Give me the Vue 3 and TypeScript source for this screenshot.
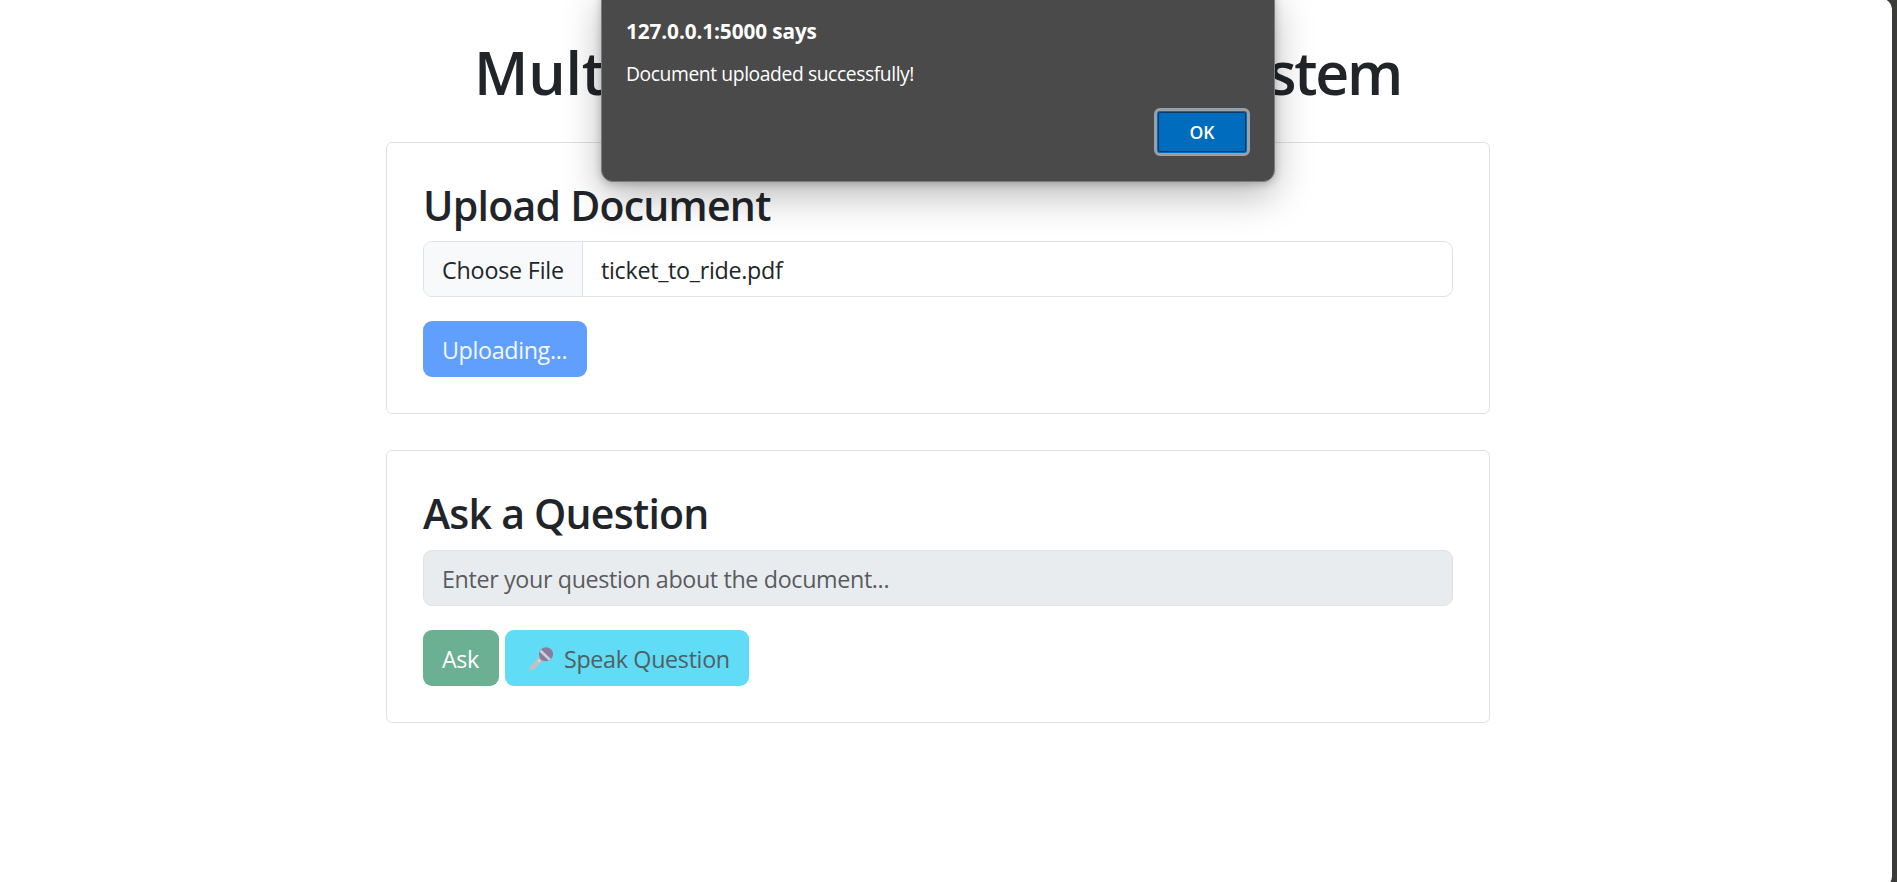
<script setup lang="ts">
import { ref } from 'vue'

const fileName = ref('ticket_to_ride.pdf')
const question = ref('')
const dialog = {
  origin: '127.0.0.1:5000 says',
  message: 'Document uploaded successfully!',
}
</script>

<template>
  <div class="window">
    <div class="page">
      <main class="container">
        <h1 class="title"><span>Mult</span><span class="title-end">stem</span></h1>

        <section class="card">
          <h2 class="heading upload-heading">Upload Document</h2>
          <div class="field file">
            <span class="choose">Choose File</span>
            <span class="name">{{ fileName }}</span>
          </div>
          <div class="actions">
            <button class="btn primary" disabled>Uploading...</button>
          </div>
        </section>

        <section class="card">
          <h2 class="heading">Ask a Question</h2>
          <input
            v-model="question"
            class="field question"
            type="text"
            placeholder="Enter your question about the document..."
            disabled
          />
          <div class="actions">
            <button class="btn success" disabled>Ask</button>
            <button class="btn info" disabled>
              <svg class="mic" viewBox="0 0 24 24" aria-hidden="true">
                <path d="M10.6 9.2 14.8 13.4 4.2 22.8Q2.4 24.2.9 23 -.4 21.6.8 19.9Z" fill="#bfc1c3" />
                <path d="M10.6 9.2 14.8 13.4 13 15 9.2 11Z" fill="#aeb1b6" />
                <circle cx="17" cy="7.2" r="7" fill="#8b7b9d" />
                <path d="M12.1 2.5 22 12.1 20 13.8 10.6 4.8Z" fill="#cdd1d9" />
                <circle cx="10" cy="13.8" r="1.2" fill="#d9e3e6" />
              </svg>
              <span>Speak Question</span>
            </button>
          </div>
        </section>
      </main>
    </div>

    <div class="dialog" role="alertdialog">
      <div class="origin">{{ dialog.origin }}</div>
      <div class="message">{{ dialog.message }}</div>
      <div class="dialog-actions">
        <button class="ok">OK</button>
      </div>
    </div>
  </div>
</template>

<style>
body {
  margin: 0;
  overflow: hidden;
}
</style>

<style scoped>
.window {
  position: relative;
  height: 882px;
  overflow: hidden;
  background: #3b3b38;
  color: #212529;
  font-family: "Open Sans", "Noto Sans", sans-serif;
  font-size: 23.3px;
}
.window * {
  box-sizing: border-box;
}
.page {
  width: 1892px;
  height: 890px;
  margin-top: -2px;
  padding-top: 38px;
  border-radius: 0 12px 12px 0;
  background: #fff;
}
.container {
  width: 1104px;
  margin-left: 386px;
}
.title {
  display: flex;
  justify-content: space-between;
  height: 72px;
  margin: 0 0 34px;
  padding: 0 89px 0 88px;
  font-size: 59px;
  font-weight: 550;
  line-height: 72px;
  letter-spacing: -0.15px;
}
.title-end {
  letter-spacing: -2.3px;
}
.card {
  margin-bottom: 36px;
  padding: 36px;
  border: 1px solid #dee2e6;
  border-radius: 6px;
}
.heading {
  height: 50.4px;
  margin: 0 0 12px;
  padding-top: 1px;
  font-size: 41px;
  font-weight: 550;
  line-height: 50.4px;
  letter-spacing: -0.76px;
}
.upload-heading {
  letter-spacing: -0.75px;
}
.field {
  width: 100%;
  height: 56px;
  border: 1px solid #dee2e6;
  border-radius: 9px;
}
.file {
  display: flex;
  overflow: hidden;
  line-height: 56px;
}
.choose {
  width: 159px;
  padding-left: 18px;
  border-right: 1px solid #dee2e6;
  background: #f8f9fa;
  letter-spacing: -0.2px;
}
.name {
  padding-left: 18px;
  letter-spacing: -0.3px;
}
.question {
  display: block;
  padding: 2px 18px 0;
  background: #e9ecef;
  font: inherit;
  letter-spacing: -0.36px;
}
.question::placeholder {
  color: #595c5f;
  opacity: 1;
}
.actions {
  display: flex;
  gap: 6px;
  margin-top: 24px;
}
.btn {
  display: flex;
  align-items: center;
  height: 56px;
  padding: 2px 0 0 19px;
  border: 0;
  border-radius: 9px;
  color: #fff;
  font: inherit;
  white-space: nowrap;
}
.primary {
  width: 164px;
  background: #619fff;
  color: #f3f8ff;
  font-weight: 440;
  letter-spacing: -0.36px;
}
.success {
  width: 76px;
  background: #6bb092;
  font-weight: 460;
  letter-spacing: -0.4px;
}
.info {
  width: 244px;
  background: #61dcf6;
  color: #4f6063;
  letter-spacing: -0.33px;
}
.mic {
  width: 24px;
  height: 24px;
  margin: 0 11px 0 5px;
}
.dialog {
  position: absolute;
  top: -12px;
  left: 601px;
  width: 674px;
  height: 194px;
  padding: 28px 24px 25px;
  border: 1px solid #7c7c7c;
  border-radius: 12px;
  background: #4a4a4a;
  color: #fff;
  box-shadow: 0 14px 38px rgba(0, 0, 0, 0.27), 0 2px 8px rgba(0, 0, 0, 0.22);
}
.origin {
  height: 28px;
  font-size: 20.8px;
  font-weight: 700;
  line-height: 28px;
  letter-spacing: -0.12px;
}
.message {
  height: 28px;
  margin-top: 15px;
  font-size: 19.3px;
  line-height: 28px;
  letter-spacing: -0.41px;
}
.dialog-actions {
  display: flex;
  justify-content: flex-end;
  margin-top: 20px;
}
.ok {
  width: 96px;
  height: 48px;
  padding: 0;
  border: 3px solid #9aa0a6;
  border-radius: 6px;
  background: #006cbe;
  box-shadow: inset 0 0 0 1px #006cbe, inset 0 0 0 2px #0a3d66;
  color: #fff;
  font: 600 17.6px "Open Sans", sans-serif;
}
</style>
